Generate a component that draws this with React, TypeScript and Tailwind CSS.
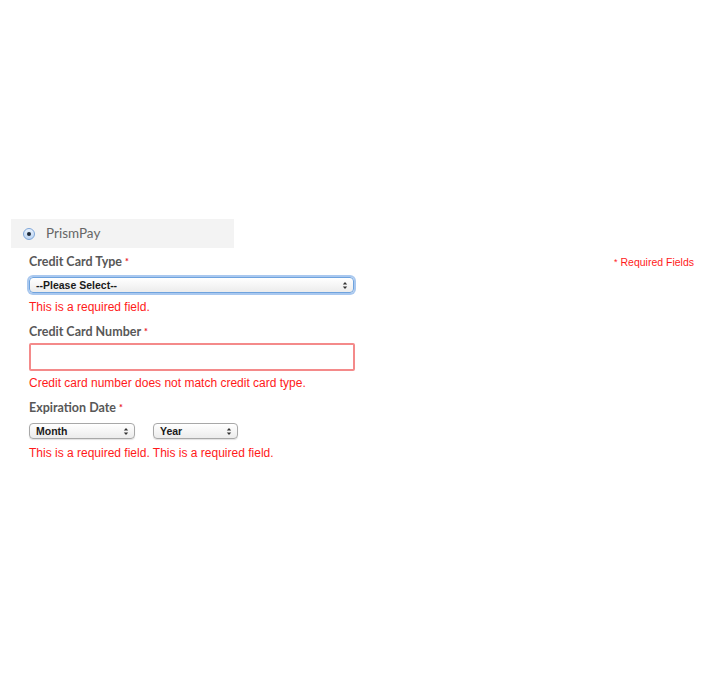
import React from "react";

const labelFont = { fontFamily: "Lato, 'Open Sans', sans-serif" };

const Label = ({ text }: { text: string }) => (
  <div className="h-4 leading-4 text-[12.5px] font-bold text-[#585858]" style={labelFont}>
    {text}
    <span className="text-[#e8141d] text-[9px] align-top ml-[3px]">*</span>
  </div>
);

const ErrorText = ({ text, className = "" }: { text: string; className?: string }) => (
  <div
    className={`h-4 leading-4 text-[12px] text-[#ff1a1a] font-['Liberation_Sans',Arial,sans-serif] ${className}`}
  >
    {text}
  </div>
);

const Arrows = () => (
  <svg width="6" height="9" viewBox="0 0 6 9" className="shrink-0">
    <path d="M0.8 3.5 L3 1 L5.2 3.5 Z" fill="#333" />
    <path d="M0.8 5.5 L3 8 L5.2 5.5 Z" fill="#333" />
  </svg>
);

const FakeSelect = ({
  text,
  width,
  focused = false,
}: {
  text: string;
  width: string;
  focused?: boolean;
}) => (
  <div
    className={`${width} h-4 flex items-center justify-between pl-[6px] pr-[5px] rounded-[4px] border bg-gradient-to-b from-white to-[#ececec] text-[10.5px] font-bold text-[#1a1a1a] font-['Liberation_Sans',Arial,sans-serif] ${
      focused
        ? "border-[#6fa3de] shadow-[0_0_0_2px_#a9c8ef]"
        : "border-[#a8a8a8] shadow-[0_1px_1px_rgba(0,0,0,0.12)]"
    }`}
  >
    <span className="leading-none">{text}</span>
    <Arrows />
  </div>
);

export default function App() {
  return (
    <div className="w-[725px] h-[680px] bg-white pt-[219px] pl-[11px]">
      <div className="w-[223px] h-[29px] bg-[#f3f3f3] flex items-center pl-[12px]">
        <span className="w-[12px] h-[12px] rounded-full border border-[#7ea6d9] bg-gradient-to-b from-[#e8f1fc] to-[#bcd4f2] flex items-center justify-center">
          <span className="w-[4px] h-[4px] rounded-full bg-[#1d2a3a]" />
        </span>
        <span
          className="ml-[11px] text-[13.5px] text-[#666] leading-none"
          style={labelFont}
        >
          PrismPay
        </span>
      </div>

      <div className="pl-[18px] pr-[31px]">
        <div className="mt-[6px] flex justify-between items-center">
          <Label text="Credit Card Type" />
          <div className="text-[10.5px] text-[#ff1a1a] font-['Liberation_Sans',Arial,sans-serif] leading-4">
            <span className="text-[9px] align-top mr-[3px]">*</span>
            Required Fields
          </div>
        </div>
        <div className="mt-[7px]">
          <FakeSelect text="--Please Select--" width="w-[325px]" focused />
        </div>
        <ErrorText text="This is a required field." className="mt-[6px]" />

        <div className="mt-[9px]">
          <Label text="Credit Card Number" />
        </div>
        <div className="mt-[3px] w-[326px] h-[28px] border-2 border-[#f48a8a] rounded-[2px] bg-white" />
        <ErrorText
          text="Credit card number does not match credit card type."
          className="mt-[4px]"
        />

        <div className="mt-[9px]">
          <Label text="Expiration Date" />
        </div>
        <div className="mt-[7px] flex gap-[18px]">
          <FakeSelect text="Month" width="w-[106px]" />
          <FakeSelect text="Year" width="w-[85px]" />
        </div>
        <ErrorText
          text="This is a required field. This is a required field."
          className="mt-[6px]"
        />
      </div>
    </div>
  );
}
